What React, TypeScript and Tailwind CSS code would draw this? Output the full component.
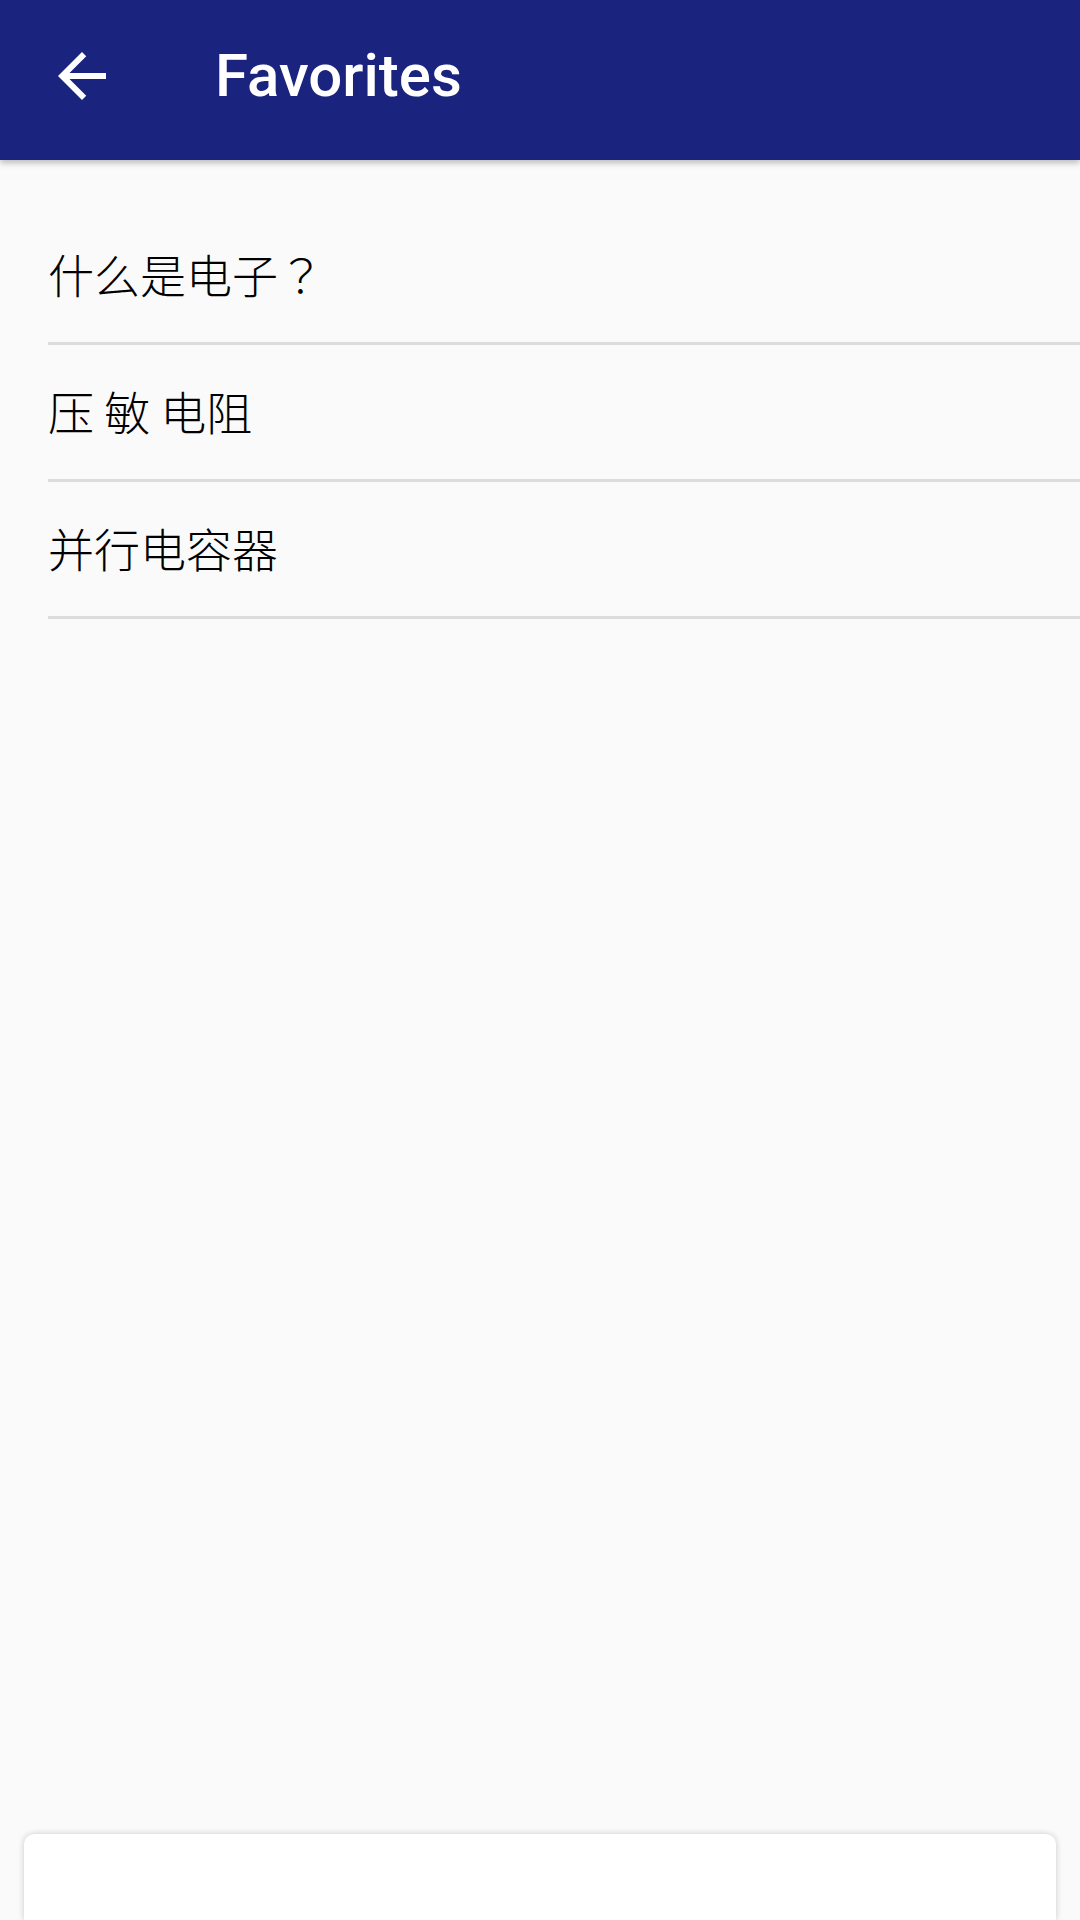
import React from 'react';

const favorites = ['什么是电子？', '压 敏 电阻', '并行电容器'];

// full-width punctuation sits centred in the reference, as in the TC cut
function Label({ text }: { text: string }) {
  return (
    <>
      {text.split(/(？)/).map((part, i) =>
        part === '？' ? (
          <span key={i} className="[font-family:'Noto_Sans_CJK_TC',sans-serif]">？</span>
        ) : (
          <span key={i}>{part}</span>
        )
      )}
    </>
  );
}

export default function App() {
  return (
    <div className="flex h-[1920px] w-[1080px] flex-col overflow-hidden bg-[#fafafa]">
      <header className="relative z-10 flex h-[160px] shrink-0 items-center bg-[#1a237e] pb-[8px] shadow-[0_3px_6px_rgba(0,0,0,0.25)]">
        <button className="ml-[46px] flex h-[72px] w-[72px] items-center justify-center">
          <svg viewBox="0 0 24 24" width="72" height="72" fill="#ffffff">
            <path d="M20 11H7.83l5.59-5.59L12 4l-8 8 8 8 1.41-1.41L7.83 13H20v-2z" />
          </svg>
        </button>
        <h1 className="ml-[97px] text-[60px] font-medium leading-none text-white [font-family:Roboto,'Noto_Sans',sans-serif]">
          Favorites
        </h1>
      </header>

      <ul className="pt-[48px]">
        {favorites.map(item => (
          <li
            key={item}
            className="ml-[48px] flex h-[137px] items-center border-b-[3px] border-[#dcdcdc] pb-[4px] text-[46px] font-light leading-none text-black [font-family:'Noto_Sans_CJK_SC',sans-serif]"
          >
            <Label text={item} />
          </li>
        ))}
      </ul>

      <div className="mx-[24px] mt-auto h-[86px] shrink-0 rounded-t-[10px] bg-white shadow-[0_0_6px_rgba(0,0,0,0.2)]" />
    </div>
  );
}
